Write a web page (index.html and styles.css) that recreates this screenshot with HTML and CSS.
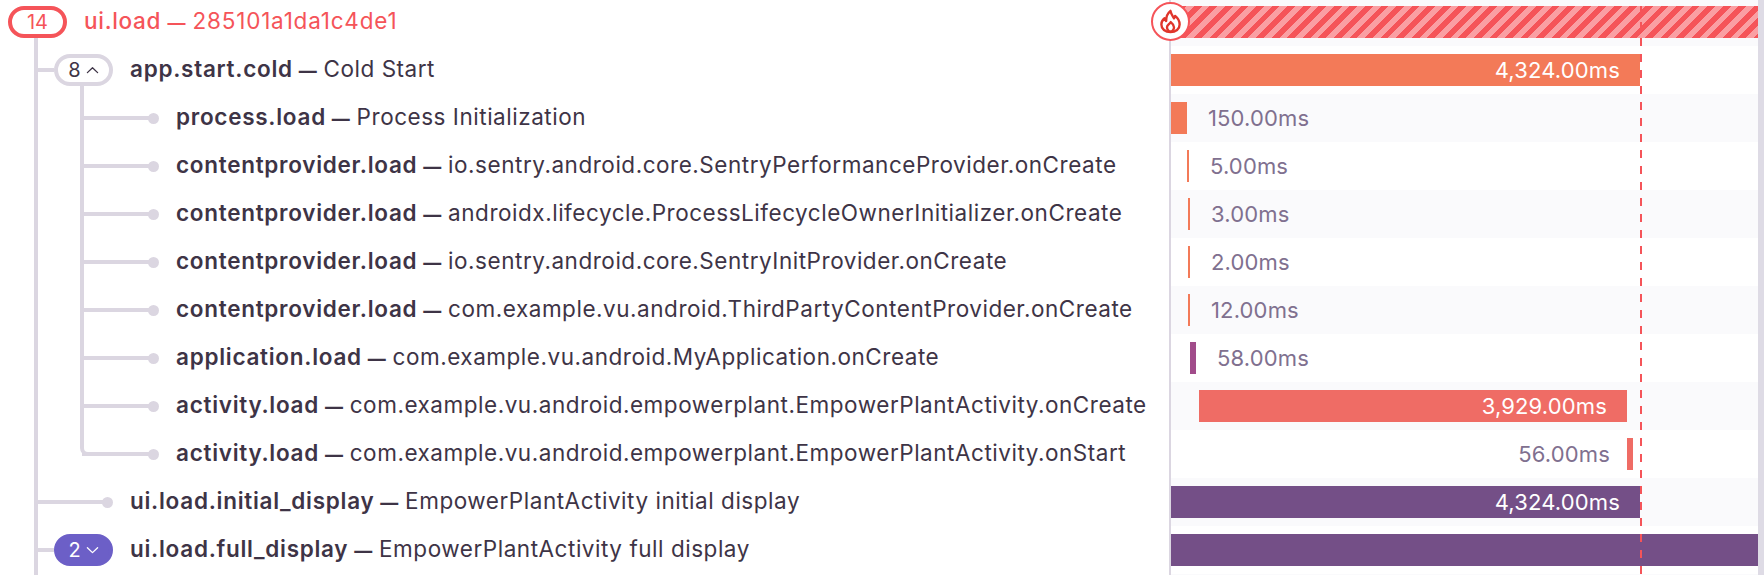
FILE: index.html
```html
<!DOCTYPE html>
<html lang="en">
<head>
<meta charset="utf-8">
<title>Trace waterfall</title>
<link rel="stylesheet" href="styles.css">
</head>
<body>
<div class="tree">
  <div class="root-line"></div>
  <div class="group-line"></div>
  <div class="marker-line"></div>

  <div class="row">
    <div class="label depth-0 error">
      <div class="slot"><span class="badge badge-error">14</span></div>
      <span class="text"><b>ui.load</b> <b class="dash">—</b> 285101a1da1c4de1</span>
    </div>
    <div class="timeline shade">
      <div class="bar stripes" style="width:587px"></div>
      <span class="fire">
        <svg viewBox="0 0 20 20" width="25" height="25" fill="none" stroke="#e0352b" stroke-width="1.9" stroke-linejoin="round">
          <path d="M10 1.5C10.5 4.5 12 6 12.8 7.5C13.3 6.8 13.6 6.2 13.7 5.5C16 7.3 17.3 10 17.3 12.3C17.3 16 14.2 18.5 10 18.5C5.8 18.5 2.7 16 2.7 12.3C2.7 10 4 8.5 5.3 7.4C5.5 8.3 5.8 9 6.5 9.6C6.5 6.5 7.5 3.5 10 1.5Z"/>
          <path d="M10.2 10.5C11.8 11.8 12.8 13 12.8 14.5C12.8 16.2 11.5 18 10 18C8.5 18 7.2 16.2 7.2 14.5C7.2 13 8.8 12.5 10.2 10.5Z"/>
        </svg>
      </span>
    </div>
  </div>

  <div class="row">
    <div class="label depth-1">
      <div class="slot"><span class="stem-left"></span><span class="badge">8<svg class="chev" viewBox="0 0 14 8" width="13" height="8" fill="none" stroke="currentColor" stroke-width="1.4" stroke-linecap="round" stroke-linejoin="round"><path d="M1.5 6.8L7 1.5L12.5 6.8"/></svg></span></div>
      <span class="text"><b>app.start.cold</b> <b class="dash">—</b> Cold Start</span>
    </div>
    <div class="timeline">
      <div class="bar orange" style="width:469px"><span class="inside">4,324.00ms</span></div>
    </div>
  </div>

  <div class="row">
    <div class="label depth-2">
      <div class="slot"><span class="stem"></span><span class="dot"></span></div>
      <span class="text"><b>process.load</b> <b class="dash">—</b> Process Initialization</span>
    </div>
    <div class="timeline shade">
      <div class="bar orange" style="width:16px"></div><span class="after">150.00ms</span>
    </div>
  </div>

  <div class="row">
    <div class="label depth-2">
      <div class="slot"><span class="stem"></span><span class="dot"></span></div>
      <span class="text"><b>contentprovider.load</b> <b class="dash">—</b> io.sentry.android.core.SentryPerformanceProvider.onCreate</span>
    </div>
    <div class="timeline">
      <div class="bar orange" style="margin-left:16px;width:2px"></div><span class="after">5.00ms</span>
    </div>
  </div>

  <div class="row">
    <div class="label depth-2">
      <div class="slot"><span class="stem"></span><span class="dot"></span></div>
      <span class="text"><b>contentprovider.load</b> <b class="dash">—</b> androidx.lifecycle.ProcessLifecycleOwnerInitializer.onCreate</span>
    </div>
    <div class="timeline shade">
      <div class="bar orange" style="margin-left:17px;width:2px"></div><span class="after">3.00ms</span>
    </div>
  </div>

  <div class="row">
    <div class="label depth-2">
      <div class="slot"><span class="stem"></span><span class="dot"></span></div>
      <span class="text"><b>contentprovider.load</b> <b class="dash">—</b> io.sentry.android.core.SentryInitProvider.onCreate</span>
    </div>
    <div class="timeline">
      <div class="bar orange" style="margin-left:17px;width:2px"></div><span class="after">2.00ms</span>
    </div>
  </div>

  <div class="row">
    <div class="label depth-2">
      <div class="slot"><span class="stem"></span><span class="dot"></span></div>
      <span class="text"><b>contentprovider.load</b> <b class="dash">—</b> com.example.vu.android.ThirdPartyContentProvider.onCreate</span>
    </div>
    <div class="timeline shade">
      <div class="bar orange" style="margin-left:17px;width:2px"></div><span class="after">12.00ms</span>
    </div>
  </div>

  <div class="row">
    <div class="label depth-2">
      <div class="slot"><span class="stem"></span><span class="dot"></span></div>
      <span class="text"><b>application.load</b> <b class="dash">—</b> com.example.vu.android.MyApplication.onCreate</span>
    </div>
    <div class="timeline">
      <div class="bar magenta" style="margin-left:19px;width:6px"></div><span class="after">58.00ms</span>
    </div>
  </div>

  <div class="row">
    <div class="label depth-2">
      <div class="slot"><span class="stem"></span><span class="dot"></span></div>
      <span class="text"><b>activity.load</b> <b class="dash">—</b> com.example.vu.android.empowerplant.EmpowerPlantActivity.onCreate</span>
    </div>
    <div class="timeline shade">
      <div class="bar coral" style="margin-left:28px;width:428px"><span class="inside">3,929.00ms</span></div>
    </div>
  </div>

  <div class="row">
    <div class="label depth-2">
      <div class="slot"><span class="stem"></span><span class="dot"></span></div>
      <span class="text"><b>activity.load</b> <b class="dash">—</b> com.example.vu.android.empowerplant.EmpowerPlantActivity.onStart</span>
    </div>
    <div class="timeline">
      <span class="before" style="width:456px">56.00ms</span><div class="bar coral" style="width:6px"></div>
    </div>
  </div>

  <div class="row">
    <div class="label depth-1">
      <div class="slot"><span class="stem"></span><span class="dot"></span></div>
      <span class="text"><b>ui.load.initial_display</b> <b class="dash">—</b> EmpowerPlantActivity initial display</span>
    </div>
    <div class="timeline shade">
      <div class="bar purple" style="width:469px"><span class="inside">4,324.00ms</span></div>
    </div>
  </div>

  <div class="row">
    <div class="label depth-1">
      <div class="slot"><span class="stem-left"></span><span class="badge badge-solid">2<svg class="chev" viewBox="0 0 14 8" width="13" height="8" fill="none" stroke="currentColor" stroke-width="1.4" stroke-linecap="round" stroke-linejoin="round"><path d="M1.5 1.5L7 6.8L12.5 1.5"/></svg></span></div>
      <span class="text"><b>ui.load.full_display</b> <b class="dash">—</b> EmpowerPlantActivity full display</span>
    </div>
    <div class="timeline">
      <div class="bar purple" style="width:587px"></div>
    </div>
  </div>

  <div class="row">
    <div class="label"></div>
    <div class="timeline shade"></div>
  </div>
</div>
</body>
</html>
```

FILE: styles.css
```css
* { box-sizing: border-box; }

html, body {
  margin: 0;
  height: 575px;
  overflow: hidden;
  background: #fff;
}

body {
  font-family: Inter, "Liberation Sans", sans-serif;
  font-size: 22.5px;
  color: #3e3446;
}

.tree {
  position: relative;
  margin-top: -2px;
  border-right: 6px solid #dedbe5;
  height: 577px;
  overflow: hidden;
}

.row {
  display: flex;
  height: 48px;
}

/* label column */
.label {
  width: 1169px;
  flex: none;
  display: flex;
  align-items: center;
  gap: 17px;
  white-space: nowrap;
}

.depth-0 { padding-left: 8px; }
.depth-1 { padding-left: 54px; }
.depth-2 { padding-left: 100px; }

.slot {
  position: relative;
  width: 59px;
  height: 32px;
  flex: none;
  display: flex;
  align-items: center;
}

.text {
  position: relative;
  top: -2px;
  letter-spacing: 0.53px;
}

.text b {
  font-weight: 600;
  letter-spacing: 0.72px;
}

.text .dash {
  font-size: 18px;
  font-weight: 800;
  letter-spacing: 0;
  margin-left: -1px;
}

.error,
.error .text b { color: #f55459; }
.error .text { letter-spacing: 0.8px; }
.error .text b { font-weight: 500; }
.error .text .dash { font-weight: 700; }

/* tree connectors */
.root-line {
  position: absolute;
  left: 34px;
  top: 38px;
  bottom: 0;
  width: 4px;
  background: #dbd6e1;
}

.group-line {
  position: absolute;
  left: 80px;
  top: 86px;
  width: 30px;
  height: 372px;
  border-left: 4px solid #dbd6e1;
  border-bottom: 4px solid #dbd6e1;
  border-bottom-left-radius: 8px;
}

.stem {
  flex: 1;
  height: 4px;
  margin-left: -18px;
  background: #dbd6e1;
}

.stem-left {
  position: absolute;
  left: -18px;
  width: 18px;
  height: 4px;
  background: #dbd6e1;
}

.dot {
  width: 11px;
  height: 11px;
  flex: none;
  margin-left: -1px;
  border-radius: 50%;
  background: #dbd6e1;
}

.badge {
  width: 59px;
  height: 32px;
  display: flex;
  align-items: center;
  justify-content: center;
  gap: 5px;
  border: 4px solid #dbd6e1;
  border-radius: 16px;
  background: #fff;
  font-size: 20px;
}

.badge-error {
  border-color: #f55459;
  color: #f55459;
}

.badge-solid {
  border-color: #6c5fc7;
  background: #6c5fc7;
  color: #fff;
}

/* timeline column */
.timeline {
  position: relative;
  flex: 1;
  display: flex;
  align-items: center;
  border-left: 2px solid #dbd6e1;
  font-size: 22px;
  letter-spacing: 0.15px;
  color: #80708f;
  white-space: nowrap;
}

.shade { background: #fafafc; }

.bar {
  height: 32px;
  flex: none;
  display: flex;
  align-items: center;
  justify-content: flex-end;
}

.inside {
  padding-right: 20px;
  color: #fff;
}

.after { margin-left: 21px; }

.before {
  padding-right: 17px;
  text-align: right;
}

.orange { background: #f37a58; }
.coral { background: #ef6c65; }
.magenta { background: #a14c8a; }
.purple { background: #744f87; }

.stripes {
  background: repeating-linear-gradient(135deg, #fa9fa3 0, #fa9fa3 5.5px, #f55459 5.5px, #f55459 11px);
}

.fire {
  position: absolute;
  left: -20px;
  top: 4px;
  width: 39px;
  height: 39px;
  display: flex;
  align-items: center;
  justify-content: center;
  border: 2px solid #f55459;
  border-radius: 50%;
  background: #fff;
}

/* dashed marker across every row */
.marker-line {
  position: absolute;
  z-index: 2;
  left: 1640px;
  top: 8px;
  bottom: 0;
  width: 2px;
  background: repeating-linear-gradient(180deg, #f55459 0, #f55459 8px, transparent 8px, transparent 16px);
}
```
